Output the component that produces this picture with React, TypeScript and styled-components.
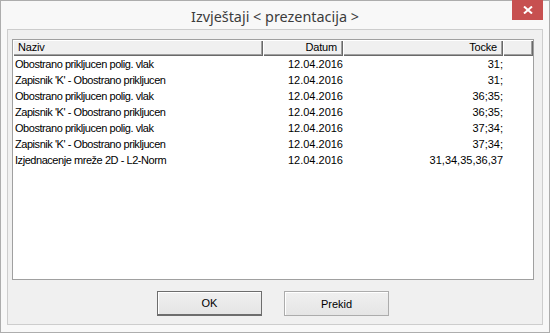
import React from 'react'
import styled, { createGlobalStyle } from 'styled-components'

//styling:
const GlobalStyle = createGlobalStyle`
  html, body {
    margin: 0;
    padding: 0;
    background: #ffffff;
  }
`
const Window = styled.div`
  position: relative;
  box-sizing: border-box;
  width: 550px;
  height: 333px;
  border: 1px solid #adadad;
  background-color: #f8f8f8;
  display: flex;
  flex-direction: column;
  padding: 0 6px 7px 6px;
  font-family: 'Liberation Sans', Arial, sans-serif;
`
const TitleBar = styled.div`
  height: 28px;
  display: flex;
  align-items: center;
  justify-content: center;
  font-family: 'Noto Sans', 'Open Sans', sans-serif;
  font-size: 14.4px;
  color: #3c3c3c;
  padding-top: 2px;
  box-sizing: border-box;
`
const CloseBtn = styled.div`
  position: absolute;
  top: -1px;
  right: 6px;
  width: 31px;
  height: 20px;
  background-color: #c75050;
  display: flex;
  align-items: center;
  justify-content: center;
`
const Client = styled.div`
  flex: 1;
  border: 1px solid #cdcdcd;
  background-color: #f0f0f0;
  display: flex;
  flex-direction: column;
  padding: 9px 8px 8px 4px;
`
const ListView = styled.div`
  box-sizing: border-box;
  height: 241px;
  border: 1px solid #a0a0a0;
  background-color: #ffffff;
  font-size: 11px;
  color: #000000;
`
const HeaderRow = styled.div`
  display: flex;
  height: 16px;
`
const HeaderCell = styled.div<{ $w: number; $right?: boolean }>`
  box-sizing: border-box;
  width: ${p => p.$w}px;
  height: 16px;
  line-height: 15px;
  background-color: #f0f0f0;
  box-shadow: inset 1px 1px #ffffff, inset -1px -1px #696969, inset -2px -2px #a0a0a0;
  text-align: ${p => (p.$right ? 'right' : 'left')};
  padding: ${p => (p.$right ? '0 6px 0 0' : '0 0 0 5px')};
  letter-spacing: -0.2px;
  white-space: nowrap;
  overflow: hidden;
`
const Row = styled.div`
  display: flex;
  height: 16px;
  line-height: 16px;
`
const Cell = styled.div<{ $w: number; $right?: boolean; $tight?: boolean }>`
  box-sizing: border-box;
  width: ${p => p.$w}px;
  text-align: ${p => (p.$right ? 'right' : 'left')};
  padding: ${p => (p.$right ? '0' : '0 0 0 2px')};
  letter-spacing: ${p => (p.$tight ? '-0.45px' : '0')};
  white-space: nowrap;
  overflow: hidden;
`
const ButtonRow = styled.div`
  display: flex;
  justify-content: center;
  gap: 22px;
  margin-top: 11px;
`
const Button = styled.button<{ $default?: boolean }>`
  box-sizing: border-box;
  width: 105px;
  height: 25px;
  font-family: 'Liberation Sans', Arial, sans-serif;
  font-size: 11px;
  color: #000000;
  background: linear-gradient(#f0f0f0, #e5e5e5);
  border: 1px solid ${p => (p.$default ? '#6d6d6d' : '#acacac')};
  border-bottom-width: ${p => (p.$default ? '2px' : '1px')};
  box-shadow: inset 1px 1px #ffffff;
  padding: 0;
  cursor: pointer;
`
/////////

const cols = [250, 80, 160, 30]

const rows: [string, string, string][] = [
  ['Obostrano prikljucen polig. vlak', '12.04.2016', '31;'],
  ["Zapisnik 'K' - Obostrano prikljucen", '12.04.2016', '31;'],
  ['Obostrano prikljucen polig. vlak', '12.04.2016', '36;35;'],
  ["Zapisnik 'K' - Obostrano prikljucen", '12.04.2016', '36;35;'],
  ['Obostrano prikljucen polig. vlak', '12.04.2016', '37;34;'],
  ["Zapisnik 'K' - Obostrano prikljucen", '12.04.2016', '37;34;'],
  ['Izjednacenje mreže 2D - L2-Norm', '12.04.2016', '31,34,35,36,37'],
]

export default function App() {
  return (
    <>
      <GlobalStyle />
      <Window>
        <TitleBar>Izvještaji &lt; prezentacija &gt;</TitleBar>
        <CloseBtn>
          <svg width="10" height="8" viewBox="0 0 10 8">
            <path d="M1 0.5 L9 7.5 M9 0.5 L1 7.5" stroke="#ffffff" strokeWidth="2" />
          </svg>
        </CloseBtn>
        <Client>
          <ListView>
            <HeaderRow>
              <HeaderCell $w={cols[0]}>Naziv</HeaderCell>
              <HeaderCell $w={cols[1]} $right>Datum</HeaderCell>
              <HeaderCell $w={cols[2]} $right>Tocke</HeaderCell>
              <HeaderCell $w={cols[3]} />
            </HeaderRow>
            {rows.map((r, i) => (
              <Row key={i}>
                <Cell $w={cols[0]} $tight>{r[0]}</Cell>
                <Cell $w={cols[1]} $right>{r[1]}</Cell>
                <Cell $w={cols[2]} $right>{r[2]}</Cell>
              </Row>
            ))}
          </ListView>
          <ButtonRow>
            <Button $default>OK</Button>
            <Button>Prekid</Button>
          </ButtonRow>
        </Client>
      </Window>
    </>
  )
}
